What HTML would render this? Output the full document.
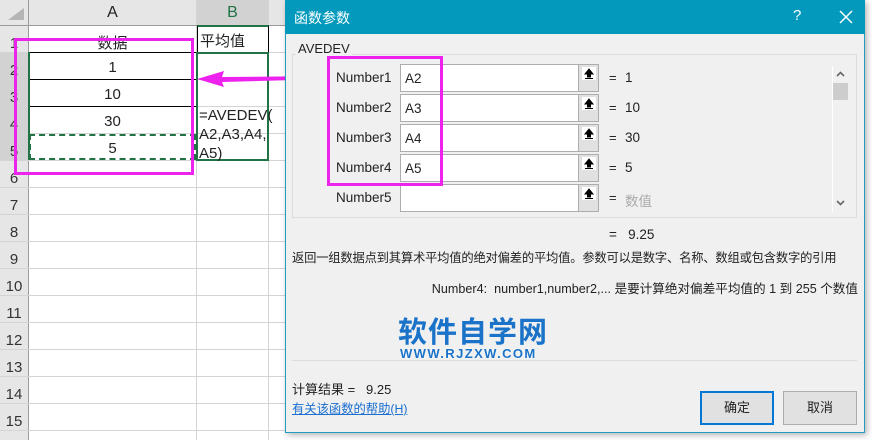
<!DOCTYPE html>
<html><head><meta charset="utf-8"><style>
*{margin:0;padding:0;box-sizing:border-box}
body{width:872px;height:440px;overflow:hidden;background:#fff;position:relative;font-family:"Liberation Sans","Noto Sans CJK SC",sans-serif;font-size:13px;color:#222}
.a{position:absolute;white-space:nowrap}
.hl{position:absolute;left:0;width:285px;height:1px;background:#d4d4d4}
.vl{position:absolute;top:0;height:440px;width:1px;background:#d4d4d4}
.rn{position:absolute;left:0;width:28px;text-align:center;font-size:15px;color:#333}
.cell{position:absolute;text-align:center;font-size:15px;color:#222}
.lbl{position:absolute;left:336px;font-size:13.5px;color:#222}
.inp{position:absolute;left:400px;width:199px;height:28px;border:1px solid #adadad;background:#fff;font-size:13.5px;padding:6px 0 0 4px}
.up{position:absolute;right:0;top:0;width:20px;height:26px;background:#e1e1e1;border-left:1px solid #adadad}
.up svg{position:absolute;left:3px;top:2px;background:#fff}
.eq{position:absolute;left:609px;font-size:13px}
.val{position:absolute;left:625px;font-size:13.5px}
.btn{position:absolute;width:74px;height:34px;background:#e1e1e1;border:1px solid #adadad;text-align:center;line-height:32px;font-size:13px}
</style></head><body>
<div class="a" style="left:0;top:0;width:285px;height:25px;background:#e6e6e6"></div>
<div class="a" style="left:0;top:0;width:28px;height:440px;background:#e6e6e6"></div>
<div class="a" style="left:197px;top:0;width:71px;height:25px;background:#d2d2d2"></div>
<div class="a" style="left:0;top:53px;width:28px;height:107px;background:#d2d2d2"></div>
<div class="a" style="left:8px;top:8px;width:0;height:0;border-left:16px solid transparent;border-bottom:12px solid #b5b5b5"></div>
<div class="vl" style="left:28px;background:#9b9b9b"></div>
<div class="vl" style="left:196px"></div>
<div class="vl" style="left:268px"></div>
<div class="hl" style="top:25px;background:#9b9b9b"></div>
<div class="hl" style="top:52px"></div><div class="hl" style="top:79px"></div><div class="hl" style="top:106px"></div><div class="hl" style="top:133px"></div><div class="hl" style="top:160px"></div><div class="hl" style="top:187px"></div><div class="hl" style="top:214px"></div><div class="hl" style="top:241px"></div><div class="hl" style="top:268px"></div><div class="hl" style="top:295px"></div><div class="hl" style="top:322px"></div><div class="hl" style="top:349px"></div><div class="hl" style="top:376px"></div><div class="hl" style="top:403px"></div><div class="hl" style="top:430px"></div>
<div class="cell" style="left:29px;top:4px;width:167px;font-size:16px">A</div>
<div class="cell" style="left:197px;top:4px;width:71px;font-size:16px;color:#217346">B</div>
<div class="rn" style="top:35px">1</div><div class="rn" style="top:62px">2</div><div class="rn" style="top:89px">3</div><div class="rn" style="top:116px">4</div><div class="rn" style="top:143px">5</div><div class="rn" style="top:170px">6</div><div class="rn" style="top:197px">7</div><div class="rn" style="top:224px">8</div><div class="rn" style="top:251px">9</div><div class="rn" style="top:278px">10</div><div class="rn" style="top:305px">11</div><div class="rn" style="top:332px">12</div><div class="rn" style="top:359px">13</div><div class="rn" style="top:386px">14</div><div class="rn" style="top:413px">15</div>
<div class="a" style="left:28px;top:52px;width:169px;height:1px;background:#000"></div>
<div class="a" style="left:28px;top:79px;width:169px;height:1px;background:#000"></div>
<div class="a" style="left:28px;top:106px;width:169px;height:1px;background:#000"></div>
<div class="a" style="left:197px;top:25px;width:72px;height:28px;border:1px solid #000;border-top:2px solid #217346"></div>
<div class="a" style="left:28px;top:52px;width:2px;height:108px;background:#217346"></div>
<div class="a" style="left:196px;top:52px;width:73px;height:109px;border:2px solid #217346"></div>
<div class="a" style="left:29px;top:134px;width:167px;height:26px;border:2px dashed #217346"></div>
<div class="cell" style="left:29px;top:32px;width:167px">数据</div>
<div class="cell" style="left:29px;top:59px;width:167px">1</div>
<div class="cell" style="left:29px;top:86px;width:167px">10</div>
<div class="cell" style="left:29px;top:113px;width:167px">30</div>
<div class="cell" style="left:29px;top:140px;width:167px">5</div>
<div class="cell" style="left:200px;top:30px;text-align:left">平均值</div>
<div class="a" style="left:199px;top:106px;font-size:15px;line-height:19px;color:#222">=AVEDEV(<br>A2,A3,A4,<br>A5)</div>
<div class="a" style="left:14px;top:38px;width:180px;height:137px;border:3px solid #ee22ee"></div>
<svg class="a" style="left:196px;top:66px" width="135" height="24"><polygon points="1,13 28,5 26,11 134,10 134,13 26,16 28,21" fill="#ee22ee"/></svg>
<div class="a" style="left:285px;top:0;width:580px;height:433px;background:#f0f0f0;border:1px solid #1f9ec0;box-shadow:2px 2px 6px rgba(0,0,0,.3)"></div>
<div class="a" style="left:285px;top:0;width:580px;height:34px;background:#0399bd"></div>
<div class="a" style="left:294px;top:8px;color:#fff;font-size:14px">函数参数</div>
<div class="a" style="left:793px;top:7px;color:#fff;font-size:15px">?</div>
<svg class="a" style="left:839px;top:10px" width="14" height="14"><path d="M1 1L13 13M13 1L1 13" stroke="#fff" stroke-width="1.5"/></svg>
<div class="a" style="left:292px;top:54px;width:565px;height:164px;border:1px solid #dcdcdc"></div>
<div class="a" style="left:296px;top:41px;background:#f0f0f0;padding:0 2px;font-size:13px">AVEDEV</div>
<div class="lbl" style="top:70px">Number1</div>
<div class="lbl" style="top:100px">Number2</div>
<div class="lbl" style="top:130px">Number3</div>
<div class="lbl" style="top:160px">Number4</div>
<div class="lbl" style="top:190px">Number5</div>
<div class="inp" style="top:64px">A2<div class="up"><svg width="14" height="13"><path d="M7 2L3 7H5.5V10H8.5V7H11Z M3 11.5H11" fill="#000" stroke="#000" stroke-width="1"/></svg></div></div>
<div class="inp" style="top:94px">A3<div class="up"><svg width="14" height="13"><path d="M7 2L3 7H5.5V10H8.5V7H11Z M3 11.5H11" fill="#000" stroke="#000" stroke-width="1"/></svg></div></div>
<div class="inp" style="top:124px">A4<div class="up"><svg width="14" height="13"><path d="M7 2L3 7H5.5V10H8.5V7H11Z M3 11.5H11" fill="#000" stroke="#000" stroke-width="1"/></svg></div></div>
<div class="inp" style="top:154px">A5<div class="up"><svg width="14" height="13"><path d="M7 2L3 7H5.5V10H8.5V7H11Z M3 11.5H11" fill="#000" stroke="#000" stroke-width="1"/></svg></div></div>
<div class="inp" style="top:184px"><div class="up"><svg width="14" height="13"><path d="M7 2L3 7H5.5V10H8.5V7H11Z M3 11.5H11" fill="#000" stroke="#000" stroke-width="1"/></svg></div></div>
<div class="eq" style="top:70px">=</div><div class="val" style="top:70px">1</div>
<div class="eq" style="top:100px">=</div><div class="val" style="top:100px">10</div>
<div class="eq" style="top:130px">=</div><div class="val" style="top:130px">30</div>
<div class="eq" style="top:160px">=</div><div class="val" style="top:160px">5</div>
<div class="eq" style="top:190px">=</div><div class="val" style="top:190px;color:#aaa">数值</div>
<div class="a" style="left:327px;top:56px;width:116px;height:130px;border:3px solid #ee22ee"></div>
<div class="a" style="left:832px;top:66px;width:1px;height:146px;background:#fff"></div>
<div class="a" style="left:833px;top:83px;width:15px;height:17px;background:#cdcdcd"></div>
<svg class="a" style="left:836px;top:71px" width="9" height="6"><path d="M1 5L4.5 1.5L8 5" stroke="#666" stroke-width="1.6" fill="none"/></svg>
<svg class="a" style="left:836px;top:200px" width="9" height="6"><path d="M1 1L4.5 4.5L8 1" stroke="#666" stroke-width="1.6" fill="none"/></svg>
<div class="a" style="left:609px;top:227px;font-size:13.5px">=&nbsp;&nbsp; 9.25</div>
<div class="a" style="left:292px;top:248px;font-size:12.3px;letter-spacing:-0.2px">返回一组数据点到其算术平均值的绝对偏差的平均值。参数可以是数字、名称、数组或包含数字的引用</div>
<div class="a" style="right:14px;top:278px;font-size:12.6px;text-align:right">Number4:&nbsp; number1,number2,... 是要计算绝对偏差平均值的 1 到 255 个数值</div>
<div class="a" style="left:292px;top:360px;width:565px;height:1px;background:#dcdcdc"></div>
<div class="a" style="left:398px;top:312px;font-size:29px;font-weight:bold;color:#1a73c8;letter-spacing:1px;font-family:'Noto Sans CJK SC',sans-serif;line-height:36px">软件自学网</div>
<div class="a" style="left:400px;top:346px;font-size:13px;font-weight:bold;color:#1a73c8;letter-spacing:1.4px;text-shadow:0 0 2px #fff">WWW.RJZXW.COM</div>
<div class="a" style="left:292px;top:379px;font-size:13px">计算结果 =&nbsp;&nbsp; 9.25</div>
<div class="a" style="left:292px;top:399px;font-size:12.3px;color:#1a6fd0;text-decoration:underline">有关该函数的帮助(H)</div>
<div class="btn" style="left:700px;top:391px;border:2px solid #0078d7;line-height:30px">确定</div>
<div class="btn" style="left:783px;top:391px">取消</div>
</body></html>
